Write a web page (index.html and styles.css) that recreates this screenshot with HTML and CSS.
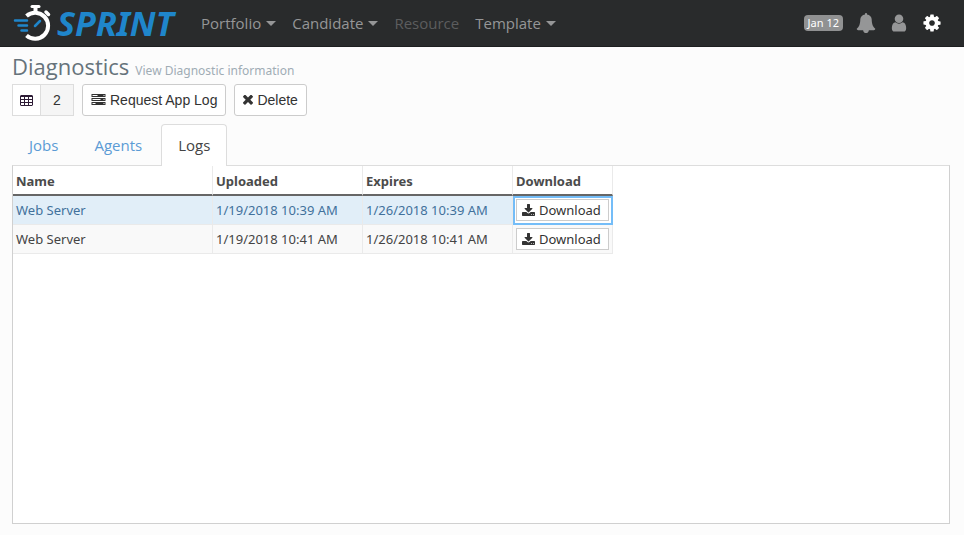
FILE: index.html
```html
<!DOCTYPE html>
<html lang="en">
<head>
<meta charset="utf-8">
<meta name="viewport" content="width=device-width, initial-scale=1">
<title>Diagnostics</title>
<link rel="stylesheet" href="styles.css">
</head>
<body>
<header class="navbar">
  <a class="brand" href="#">
    <svg class="brand-mark" viewBox="0 0 38 38" aria-hidden="true">
      <g fill="none" stroke="#fff">
        <path d="M13.500 12A13 13 0 1 1 13.500 31.500" stroke-width="4"/>
        <path d="M19 2.500h7" stroke-width="3" stroke-linecap="round"/>
        <path d="M22.500 3v7" stroke-width="4"/>
        <path d="M33 8l2.500 2.500" stroke-width="3.500" stroke-linecap="round"/>
      </g>
      <g fill="none" stroke="#1f86cb" stroke-width="2.500" stroke-linecap="round">
        <path d="M2 16.500h12M5.500 21.500h8.500M8.500 26.500h5.500M22 22l5-5"/>
      </g>
    </svg>
    <span class="brand-name">SPRINT</span>
  </a>
  <nav class="menu">
    <a class="caret" href="#">Portfolio</a>
    <a class="caret" href="#">Candidate</a>
    <a class="muted" href="#">Resource</a>
    <a class="caret" href="#">Template</a>
  </nav>
  <div class="tools">
    <span class="date">Jan 12</span>
    <a href="#" aria-label="Notifications"><svg class="icon-lg" viewBox="0 0 1792 1792"><path d="M1728 1408q0 52-38 90t-90 38h-448q0 106-75 181t-181 75-181-75-75-181h-448q-52 0-90-38t-38-90q50-42 91-88t85-119.500 74.500-158.500 50-206 19.500-260q0-152 117-282.500t307-158.500q-8-19-8-39 0-40 28-68t68-28 68 28 28 68q0 20-8 39 190 28 307 158.500t117 282.500q0 139 19.500 260t50 206 74.500 158.500 85 119.500 91 88z"/></svg></a>
    <a href="#" aria-label="Account"><svg class="icon-lg" viewBox="0 0 1792 1792"><path d="M1536 1399q0 109-62.500 187t-150.500 78h-854q-88 0-150.500-78t-62.500-187q0-85 8.500-160.500t31.500-152 58.500-131 94-89 134.500-34.500q131 128 313 128t313-128q76 0 134.500 34.500t94 89 58.500 131 31.500 152 8.500 160.500zm-256-887q0 159-112.500 271.500t-271.500 112.500-271.500-112.500-112.500-271.500 112.500-271.500 271.500-112.500 271.500 112.500 112.500 271.500z"/></svg></a>
    <a class="active" href="#" aria-label="Settings"><svg class="icon-lg" viewBox="0 0 1792 1792"><path d="M1152 896q0-106-75-181t-181-75-181 75-75 181 75 181 181 75 181-75 75-181zm512-109v222q0 12-8 23t-20 13l-185 28q-19 54-39 91 35 50 107 138 10 12 10 25t-9 23q-27 37-99 108t-94 71q-12 0-26-9l-138-108q-44 23-91 38-16 136-29 186-7 28-36 28h-222q-14 0-24.500-8.500t-11.500-21.500l-28-184q-49-16-90-37l-141 107q-10 9-25 9-14 0-25-11-126-114-165-168-7-10-7-23 0-12 8-23 15-21 51-66.500t54-70.500q-27-50-41-99l-183-27q-13-2-21-12.500t-8-23.500v-222q0-12 8-23t19-13l186-28q14-46 39-92-40-57-107-138-10-12-10-24 0-10 9-23 26-36 98.500-107.500t94.500-71.500q13 0 26 10l138 107q44-23 91-38 16-136 29-186 7-28 36-28h222q14 0 24.500 8.500t11.500 21.500l28 184q49 16 90 37l142-107q9-9 24-9 13 0 25 10 129 119 165 170 7 8 7 22 0 12-8 23-15 21-51 66.500t-54 70.500q26 50 41 98l183 28q13 2 21 12.500t8 23.500z"/></svg></a>
  </div>
</header>
<main class="page">
  <div class="heading">
    <h1>Diagnostics</h1>
    <small>View Diagnostic information</small>
  </div>
  <div class="toolbar">
    <div class="counter">
      <button type="button" aria-label="Select columns"><svg class="icon-grid" viewBox="0 0 13 11"><path fill="#2d1b35" d="M1 0h11l1 1v9l-1 1H1l-1-1V1z"/><path fill="#fff" d="M1 2h3v2H1zM5 2h3v2H5zM9 2h3v2H9zM1 5h3v2H1zM5 5h3v2H5zM9 5h3v2H9zM1 8h3v2H1zM5 8h3v2H5zM9 8h3v2H9z"/></svg></button>
      <span>2</span>
    </div>
    <button class="btn" type="button"><svg class="icon-server" viewBox="0 0 14 12"><path d="M0 0h14v3H0zM0 4h14v3H0zM0 8h14v3H0z"/><path fill="#fff" d="M1 1h5v1H1zM1 5h8v1H1zM1 9h3v1H1zM12 1h1v1h-1zM12 5h1v1h-1zM12 9h1v1h-1z"/></svg>Request App Log</button>
    <button class="btn" type="button"><svg class="icon-x" viewBox="302 324 1188 1188"><path d="M1490 1258q0 40-28 68l-136 136q-28 28-68 28t-68-28l-294-294-294 294q-28 28-68 28t-68-28l-136-136q-28-28-28-68t28-68l294-294-294-294q-28-28-28-68t28-68l136-136q28-28 68-28t68 28l294 294 294-294q28-28 68-28t68 28l136 136q28 28 28 68t-28 68l-294 294 294 294q28 28 28 68z"/></svg>Delete</button>
  </div>
  <nav class="tabs">
    <a href="#">Jobs</a>
    <a href="#">Agents</a>
    <a class="current" href="#" aria-current="page">Logs</a>
  </nav>
  <section class="panel">
    <table class="grid">
      <colgroup><col class="col-name"><col class="col-date"><col class="col-date"><col class="col-action"></colgroup>
      <thead>
        <tr><th>Name</th><th>Uploaded</th><th>Expires</th><th>Download</th></tr>
      </thead>
      <tbody>
        <tr class="selected">
          <td>Web Server</td><td>1/19/2018 10:39 AM</td><td>1/26/2018 10:39 AM</td>
          <td class="action focused"><button type="button"><svg class="icon-dl" viewBox="64 0 1664 1536"><path d="M1344 1344q0-26-19-45t-45-19-45 19-19 45 19 45 45 19 45-19 19-45zm256 0q0-26-19-45t-45-19-45 19-19 45 19 45 45 19 45-19 19-45zm128-224v320q0 40-28 68t-68 28h-1472q-40 0-68-28t-28-68v-320q0-40 28-68t68-28h465l135 136q58 56 136 56t136-56l136-136h464q40 0 68 28t28 68zm-325-569q17 41-14 70l-448 448q-18 19-45 19t-45-19l-448-448q-31-29-14-70 17-39 59-39h256v-448q0-26 19-45t45-19h256q26 0 45 19t19 45v448h256q42 0 59 39z"/></svg>Download</button></td>
        </tr>
        <tr>
          <td>Web Server</td><td>1/19/2018 10:41 AM</td><td>1/26/2018 10:41 AM</td>
          <td class="action"><button type="button"><svg class="icon-dl" viewBox="64 0 1664 1536"><path d="M1344 1344q0-26-19-45t-45-19-45 19-19 45 19 45 45 19 45-19 19-45zm256 0q0-26-19-45t-45-19-45 19-19 45 19 45 45 19 45-19 19-45zm128-224v320q0 40-28 68t-68 28h-1472q-40 0-68-28t-28-68v-320q0-40 28-68t68-28h465l135 136q58 56 136 56t136-56l136-136h464q40 0 68 28t28 68zm-325-569q17 41-14 70l-448 448q-18 19-45 19t-45-19l-448-448q-31-29-14-70 17-39 59-39h256v-448q0-26 19-45t45-19h256q26 0 45 19t19 45v448h256q42 0 59 39z"/></svg>Download</button></td>
        </tr>
      </tbody>
    </table>
  </section>
</main>
</body>
</html>
```
FILE: styles.css
```css
* { box-sizing: border-box; }
body {
  margin: 0;
  min-height: 100vh;
  display: flex;
  flex-direction: column;
  background: #fcfcfc;
  color: #444;
  font: 13px/20px "Noto Sans", "Open Sans", sans-serif;
}
a { text-decoration: none; color: inherit; }
button { font: inherit; color: #333; background: #fff; cursor: pointer; }
svg { fill: currentColor; display: block; flex: none; }

.navbar {
  display: flex;
  align-items: center;
  height: 47px;
  padding: 0 22px 0 13px;
  background: #292b2c;
  border-bottom: 1px solid #1d1f20;
  color: #959697;
}
.brand { display: flex; align-items: center; gap: 6px; width: 188px; }
.brand-mark { width: 38px; height: 38px; }
.brand-name { color: #1f86cb; font-size: 34px; line-height: 46px; font-weight: 700; font-style: italic; }
.menu { display: flex; gap: 16px; font-family: "Open Sans", sans-serif; font-size: 15px; line-height: 24px; }
.menu .muted { color: #5c5d5e; }
.caret { display: flex; align-items: center; gap: 5px; }
.caret::after { content: ""; border: 5px solid transparent; border-top-color: currentColor; border-bottom: 0; }
.tools { display: flex; align-items: center; gap: 13px; margin-left: auto; }
.tools .active { color: #fff; }
.date {
  padding: 0 4px;
  border-radius: 4px;
  background: #909192;
  color: #fff;
  font-size: 11px;
  line-height: 16px;
}
.icon-lg { width: 20px; height: 20px; }

.page { flex: 1; display: flex; flex-direction: column; padding: 5px 14px 11px 12px; }
.heading { display: flex; align-items: baseline; gap: 6px; height: 32px; }
h1 { margin: 0; font: 400 22px/28px "Open Sans", sans-serif; color: #66737b; }
small { font-size: 12px; color: #a0acb5; }
.toolbar { display: flex; gap: 8px; height: 32px; font: 14px/20px "Liberation Sans", Arial, sans-serif; }
.counter { display: flex; border: 1px solid #ddd; background: #f5f5f5; color: #333; }
.counter button { display: flex; align-items: center; padding: 0 7px; border: 0; border-right: 1px solid #ddd; }
.counter span { width: 32px; text-align: center; line-height: 30px; }
.btn { display: flex; align-items: center; gap: 4px; padding: 0 8px; border: 1px solid #ccc; border-radius: 3px; }
.icon-grid { width: 13px; height: 11px; }
.icon-server { width: 15px; height: 12px; }
.icon-x { width: 10px; height: 10px; }

.tabs { display: flex; gap: 2px; margin-top: 8px; font-family: "Open Sans", sans-serif; font-size: 15px; line-height: 24px; color: #5b9bd5; }
.tabs a { padding: 8px 16px; border: 1px solid transparent; border-bottom: 0; }
.tabs .current {
  position: relative;
  margin-bottom: -1px;
  padding-bottom: 9px;
  background: #fff;
  border-color: #ddd;
  border-radius: 4px 4px 0 0;
  color: #444;
}
.panel { flex: 1; border: 1px solid #d0d0d0; border-top-color: #ddd; background: #fff; }
.grid { table-layout: fixed; width: 600px; border-collapse: separate; border-spacing: 0; }
.col-name { width: 200px; }
.col-date { width: 150px; }
.col-action { width: 100px; }
th, td { padding: 0 3px; border-right: 1px solid #eaeaea; text-align: left; white-space: nowrap; }
th { height: 30px; padding-top: 2px; border-bottom: 2px solid #666; color: #4b4b4b; }
td { height: 29px; border-bottom: 1px solid #eaeaea; background: #f9f9f9; }
.selected td { background: #e1eef8; color: #41719c; }
.action button {
  display: flex;
  align-items: center;
  gap: 4px;
  width: 93px;
  height: 22px;
  padding: 0 5px;
  border: 1px solid #ccc;
}
.icon-dl { width: 13px; height: 12px; }
.grid .selected .focused { background: #fff; outline: 2px solid #74bdf8; outline-offset: -2px; }
```
